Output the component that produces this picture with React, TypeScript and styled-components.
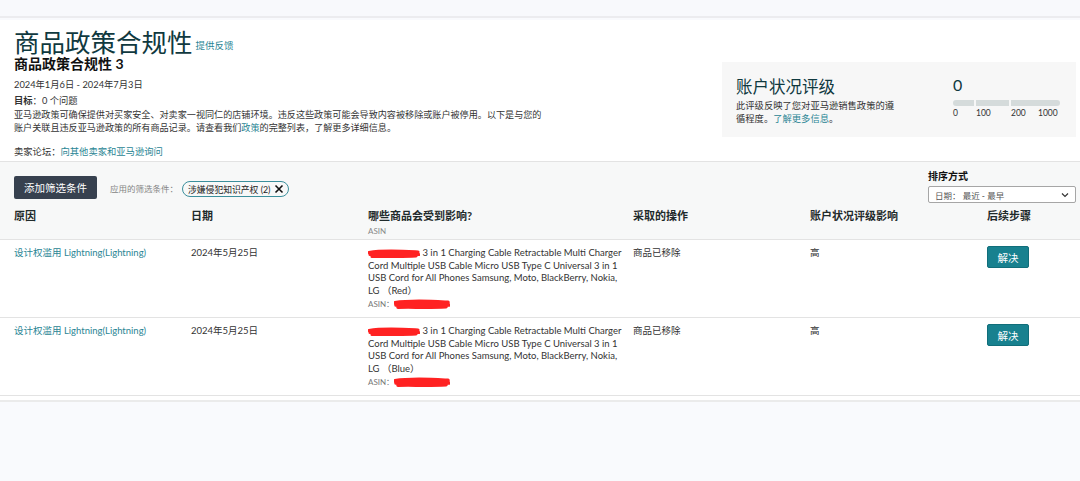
import React from 'react';
import styled, { createGlobalStyle } from 'styled-components';

const GlobalStyle = createGlobalStyle`
  html, body {
    margin: 0;
    padding: 0;
    background: #f9fafd;
    font-family: Lato, "Noto Sans CJK SC", sans-serif;
    color: #333;
  }
  * { box-sizing: border-box; }
`;

const Page = styled.div`
  width: 1080px;
  min-height: 481px;
  background: #f9fafd;
`;

const TopBand = styled.div`
  height: 18px;
  background: #f8f9fc;
  border-bottom: 2px solid #ececef;
`;

const Main = styled.div`
  background: #fff;
  margin-top: 2px;
  border-bottom: 2px solid #ebebeb;
  padding-bottom: 4px;
`;

const Intro = styled.div`
  display: flex;
  justify-content: space-between;
  align-items: flex-start;
  padding: 4px 4px 0 14px;
  height: 142px;
  border-bottom: 1px solid #e3e3e3;
`;

const IntroLeft = styled.div`
  width: 531px;
`;

const TitleRow = styled.div`
  display: flex;
  align-items: flex-end;
  gap: 3px;
`;

const Title = styled.h1`
  margin: 0;
  font-family: "Noto Sans CJK SC", sans-serif;
  font-size: 25.5px;
  font-weight: 400;
  line-height: 34px;
  color: #10393f;
`;

const Link = styled.a`
  color: #2a8594;
  text-decoration: none;
  cursor: pointer;
`;

const Feedback = styled(Link)`
  font-size: 9.5px;
  line-height: 14px;
  margin-bottom: 5px;
`;

const SubTitle = styled.h2`
  margin: -4px 0 0;
  font-size: 14px;
  font-weight: 700;
  line-height: 20px;
  color: #111;
`;

const Meta = styled.div<{ $gap?: number }>`
  font-size: 9.3px;
  line-height: 13px;
  color: #333;
  margin-top: ${(p) => p.$gap ?? 0}px;
`;

const Strong = styled.span`
  font-weight: 700;
`;

const Paragraph = styled.p`
  margin: 2px 0 0;
  font-size: 9.1px;
  line-height: 12.5px;
  color: #333;
`;

const Card = styled.div`
  width: 354px;
  height: 75px;
  margin-top: 38px;
  background: #f7f7f7;
  display: flex;
  padding: 13px 0 0 14px;
`;

const CardText = styled.div`
  width: 217px;
`;

const CardTitle = styled.div`
  font-family: "Noto Sans CJK SC", sans-serif;
  font-size: 16.5px;
  line-height: 22px;
  color: #10393f;
`;

const CardDesc = styled.div`
  font-size: 9.3px;
  line-height: 12.5px;
  color: #333;
  width: 162px;
  margin-top: 3px;
`;

const Score = styled.div`
  width: 107px;
`;

const ScoreValue = styled.div`
  font-size: 16px;
  line-height: 20px;
  color: #10393f;
`;

const Bar = styled.div`
  display: flex;
  gap: 2px;
  margin-top: 5px;
`;

const BarPart = styled.div<{ $w: number; $round?: string }>`
  width: ${(p) => p.$w}px;
  height: 6px;
  background: #d5dbdb;
  border-radius: ${(p) => p.$round ?? '0'};
`;

const BarLabels = styled.div`
  display: grid;
  grid-template-columns: 23px 35px 27px 1fr;
  font-size: 8.5px;
  line-height: 12px;
  color: #333;
  margin-top: 1px;
`;

const Grey = styled.div`
  background: #f7f8f8;
`;

const FilterBar = styled.div`
  display: flex;
  justify-content: space-between;
  padding: 8px 4px 0 14px;
  height: 44px;
`;

const FilterLeft = styled.div`
  display: flex;
  align-items: center;
  margin-top: 6px;
  height: 23px;
`;

const DarkButton = styled.button`
  width: 83px;
  height: 23px;
  border: none;
  border-radius: 2px;
  background: #37414f;
  color: #fff;
  font-family: inherit;
  font-size: 10.5px;
  padding: 0;
`;

const FilterLabel = styled.span`
  font-size: 8.5px;
  color: #858585;
  margin-left: 13px;
`;

const Chip = styled.span`
  display: inline-flex;
  align-items: center;
  gap: 4px;
  height: 16px;
  margin: 3px 0 0 4px;
  padding: 0 4px 0 5px;
  border: 1.5px solid #3b8f9c;
  border-radius: 9px;
  font-size: 8.8px;
  color: #222;
`;

const Sort = styled.div`
  width: 148px;
`;

const SortLabel = styled.div`
  font-size: 10px;
  font-weight: 700;
  line-height: 12px;
  color: #111;
`;

const Select = styled.div`
  margin-top: 4px;
  height: 17px;
  border: 1px solid #a6a6a6;
  border-radius: 2px;
  background: #fff;
  display: flex;
  align-items: center;
  justify-content: space-between;
  padding: 0 6px;
  font-size: 8.5px;
  color: #555;
`;

const cols = '177px 177px 265px 177px 177px 1fr';

const HeadRow = styled.div`
  display: grid;
  grid-template-columns: ${cols};
  padding: 3px 4px 0 14px;
  height: 34px;
  border-bottom: 1px solid #e3e3e3;
`;

const HeadCell = styled.div`
  font-size: 11px;
  font-weight: 700;
  line-height: 14px;
  color: #1f2a2b;
`;

const HeadSub = styled.div`
  font-size: 8px;
  font-weight: 400;
  color: #888;
  line-height: 12px;
  margin-top: 2px;
`;

const Row = styled.div`
  display: grid;
  grid-template-columns: ${cols};
  padding: 7px 4px 0 14px;
  height: 78px;
  border-bottom: 1px solid #e3e3e3;
  font-size: 9.5px;
  line-height: 12.7px;
  color: #333;
`;

const Cell = styled.div`
  padding-right: 10px;
`;

const Product = styled.div`
  width: 256px;
`;

const Asin = styled.div`
  font-size: 8px;
  color: #777;
  display: flex;
  align-items: center;
`;

const Resolve = styled.button`
  margin-top: -1px;
  width: 42px;
  height: 22px;
  background: #18818f;
  border: 1px solid #116e7a;
  border-radius: 2px;
  color: #fff;
  font-family: inherit;
  font-size: 10.5px;
  padding: 0;
`;

const Scribble = ({ w, h }: { w: number; h: number }) => (
  <svg width={w} height={h} viewBox={`0 0 ${w} ${h}`} style={{ verticalAlign: 'middle' }}>
    <path
      d={`M1 ${h * 0.35} C ${w * 0.3} ${h * 0.1}, ${w * 0.6} ${h * 0.2}, ${w - 2} ${h * 0.3} M2 ${h * 0.55} C ${w * 0.35} ${h * 0.45}, ${w * 0.7} ${h * 0.5}, ${w - 1} ${h * 0.55} M4 ${h * 0.75} C ${w * 0.3} ${h * 0.7}, ${w * 0.6} ${h * 0.8}, ${w - 4} ${h * 0.7}`}
      stroke="#f22" strokeWidth={h * 0.32} fill="none" strokeLinecap="round"
    />
  </svg>
);

const rows = [
  { color: 'Red' },
  { color: 'Blue' },
];

export default function App() {
  return (
    <Page>
      <GlobalStyle />
      <TopBand />
      <Main>
        <Intro>
          <IntroLeft>
            <TitleRow>
              <Title>商品政策合规性</Title>
              <Feedback>提供反馈</Feedback>
            </TitleRow>
            <SubTitle>商品政策合规性 3</SubTitle>
            <Meta $gap={4}>2024年1月6日 - 2024年7月3日</Meta>
            <Meta $gap={3}><Strong>目标</Strong>：0 个问题</Meta>
            <Paragraph>
              亚马逊政策可确保提供对买家安全、对卖家一视同仁的店铺环境。违反这些政策可能会导致内容被移除或账户被停用。以下是与您的账户关联且违反亚马逊政策的所有商品记录。请查看我们<Link>政策</Link>的完整列表，了解更多详细信息。
            </Paragraph>
            <Meta $gap={11}>卖家论坛：<Link>向其他卖家和亚马逊询问</Link></Meta>
          </IntroLeft>
          <Card>
            <CardText>
              <CardTitle>账户状况评级</CardTitle>
              <CardDesc>此评级反映了您对亚马逊销售政策的遵循程度。<Link>了解更多信息</Link>。</CardDesc>
            </CardText>
            <Score>
              <ScoreValue>0</ScoreValue>
              <Bar>
                <BarPart $w={21} $round="3px 0 0 3px" />
                <BarPart $w={33} />
                <BarPart $w={49} $round="0 3px 3px 0" />
              </Bar>
              <BarLabels>
                <span>0</span>
                <span>100</span>
                <span>200</span>
                <span>1000</span>
              </BarLabels>
            </Score>
          </Card>
        </Intro>
        <Grey>
          <FilterBar>
            <FilterLeft>
              <DarkButton>添加筛选条件</DarkButton>
              <FilterLabel>应用的筛选条件：</FilterLabel>
              <Chip>
                涉嫌侵犯知识产权 (2)
                <svg width="10" height="10" viewBox="0 0 10 10">
                  <path d="M1.5 1.5 L8.5 8.5 M8.5 1.5 L1.5 8.5" stroke="#111" strokeWidth="1.6" />
                </svg>
              </Chip>
            </FilterLeft>
            <Sort>
              <SortLabel>排序方式</SortLabel>
              <Select>
                <span>日期：&nbsp;最近 - 最早</span>
                <svg width="8" height="6" viewBox="0 0 8 6">
                  <path d="M1 1.5 L4 4.5 L7 1.5" stroke="#333" strokeWidth="1.2" fill="none" />
                </svg>
              </Select>
            </Sort>
          </FilterBar>
          <HeadRow>
            <HeadCell>原因</HeadCell>
            <HeadCell>日期</HeadCell>
            <HeadCell>
              哪些商品会受到影响?
              <HeadSub>ASIN</HeadSub>
            </HeadCell>
            <HeadCell>采取的操作</HeadCell>
            <HeadCell>账户状况评级影响</HeadCell>
            <HeadCell>后续步骤</HeadCell>
          </HeadRow>
        </Grey>
        {rows.map((r) => (
          <Row key={r.color}>
            <Cell><Link>设计权滥用 Lightning(Lightning)</Link></Cell>
            <Cell>2024年5月25日</Cell>
            <Cell>
              <Product>
                <Scribble w={52} h={10} /> 3 in 1 Charging Cable Retractable Multi Charger Cord Multiple USB Cable Micro USB Type C Universal 3 in 1 USB Cord for All Phones Samsung, Moto, BlackBerry, Nokia, LG （{r.color}）
              </Product>
              <Asin>ASIN：<Scribble w={56} h={11} /></Asin>
            </Cell>
            <Cell>商品已移除</Cell>
            <Cell>高</Cell>
            <Cell><Resolve>解决</Resolve></Cell>
          </Row>
        ))}
      </Main>
    </Page>
  );
}
